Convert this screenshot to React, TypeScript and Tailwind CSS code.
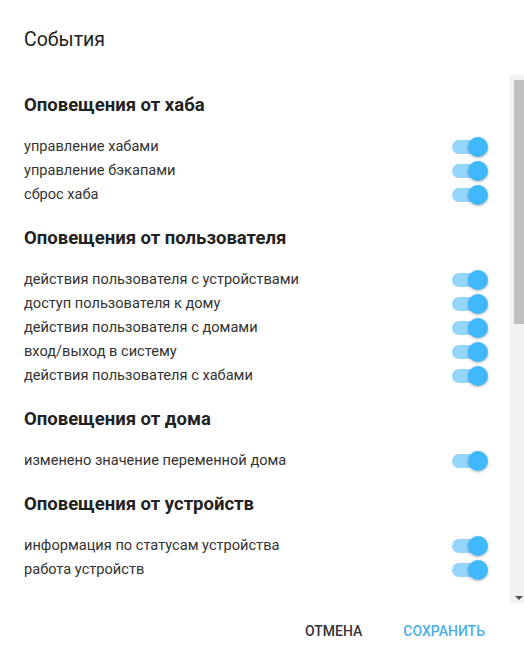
import React from "react";

const sections: { title: string; items: string[] }[] = [
  {
    title: "Оповещения от хаба",
    items: ["управление хабами", "управление бэкапами", "сброс хаба"],
  },
  {
    title: "Оповещения от пользователя",
    items: [
      "действия пользователя с устройствами",
      "доступ пользователя к дому",
      "действия пользователя с домами",
      "вход/выход в систему",
      "действия пользователя с хабами",
    ],
  },
  {
    title: "Оповещения от дома",
    items: ["изменено значение переменной дома"],
  },
  {
    title: "Оповещения от устройств",
    items: ["информация по статусам устройства", "работа устройств"],
  },
];

const Toggle = () => (
  <div className="relative w-[36px] h-[20px] flex items-center">
    <div className="w-[34px] h-[14px] rounded-full bg-[#95d6fc]" />
    <div className="absolute right-0 top-0 w-[20px] h-[20px] rounded-full bg-[#3fb8fc] shadow-[0_1px_3px_rgba(0,0,0,0.3)]" />
  </div>
);

export default function App() {
  return (
    <div className="w-[524px] h-[669px] bg-white flex flex-col font-['Roboto',sans-serif] text-[#212121]">
      {/* Header */}
      <div className="h-[75px] px-6 pt-[28px]">
        <h1 className="text-[19.5px] leading-6 text-[#222]">События</h1>
      </div>

      {/* Body */}
      <div className="h-[528px] flex">
        <div className="flex-1 overflow-hidden pl-6 pr-[22px] pt-[18px] flex flex-col gap-[19px]">
          {sections.map((s) => (
            <div key={s.title}>
              <h2 className="text-[18.5px] leading-6 font-bold text-[#222] mb-[18px]">{s.title}</h2>
              {s.items.map((it) => (
                <div key={it} className="h-6 flex items-center justify-between">
                  <span className="text-[14.6px] text-[#333]">{it}</span>
                  <Toggle />
                </div>
              ))}
            </div>
          ))}
        </div>
        {/* scrollbar */}
        <div className="w-[14px] bg-[#f1f1f1] flex flex-col">
          <div className="ml-[4px] mt-[5px] h-[244px] bg-[#c1c1c1]" />
          <div className="flex-1" />
          <div className="h-[10px] flex items-center justify-end pr-[1px]">
            <div className="w-0 h-0 border-l-[4px] border-r-[4px] border-t-[4px] border-l-transparent border-r-transparent border-t-[#505050]" />
          </div>
        </div>
      </div>

      {/* Footer */}
      <div className="flex-1 flex items-center justify-end pr-[39px] gap-[41px] pb-[10px]">
        <button className="text-[14px] font-medium text-[#333] uppercase">Отмена</button>
        <button className="text-[14px] font-medium text-[#4bb0ea] uppercase">Сохранить</button>
      </div>
    </div>
  );
}
